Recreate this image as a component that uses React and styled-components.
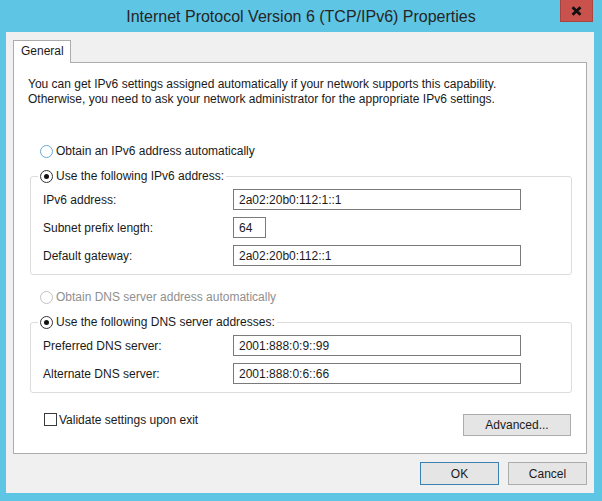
import React from 'react';
import styled, { createGlobalStyle } from 'styled-components';

const GlobalStyle = createGlobalStyle`
  html, body {
    margin: 0;
    padding: 0;
  }
  body {
    background: #5ec5e5;
    font-family: "Liberation Sans", Arial, sans-serif;
    font-size: 12px;
    color: #1a1a1a;
  }
`;

const Window = styled.div`
  width: 602px;
  height: 501px;
  background: #5ec5e5;
  display: flex;
  flex-direction: column;
`;

const TitleBar = styled.div`
  height: 32px;
  display: grid;
  grid-template-columns: 1fr auto 1fr;
  align-items: start;
`;

const Title = styled.div`
  grid-column: 2;
  line-height: 33px;
  font-size: 16px;
  color: #262626;
  white-space: nowrap;
`;

const CloseButton = styled.button`
  grid-column: 3;
  justify-self: end;
  margin-right: 9px;
  width: 33px;
  height: 22px;
  padding: 0;
  border: 1px solid #a8433f;
  border-top: none;
  background: #c9524d;
  display: flex;
  align-items: center;
  justify-content: center;
`;

const Client = styled.div`
  flex: 1;
  margin: 0 8px 8px 6px;
  background: #f0f0f0;
  padding: 8px 7px 0 7px;
  display: flex;
  flex-direction: column;
`;

const TabStrip = styled.div`
  display: flex;
`;

const Tab = styled.div`
  position: relative;
  z-index: 1;
  box-sizing: border-box;
  width: 58px;
  height: 23px;
  margin-bottom: -1px;
  padding-left: 7px;
  border: 1px solid #acacac;
  border-bottom: none;
  background: #fff;
  line-height: 21px;
`;

const Panel = styled.div`
  box-sizing: border-box;
  height: 392px;
  border: 1px solid #acacac;
  background: #fff;
  padding: 14px 14px 0 14px;
  display: flex;
  flex-direction: column;
`;

const Intro = styled.p`
  margin: 0;
  line-height: 15px;
  white-space: nowrap;
`;

const Choice = styled.label`
  display: flex;
  align-items: center;
  gap: 3px;
  height: 16px;
  margin: ${(p) => p.$top || 0}px 0 0 12px;
  color: ${(p) => (p.$disabled ? '#8f8f8f' : '#1a1a1a')};
  white-space: nowrap;
`;

const LegendChoice = styled(Choice)`
  margin: 0;
`;

const RadioDot = styled.span`
  box-sizing: border-box;
  width: 13px;
  height: 13px;
  border-radius: 50%;
  background: #fff;
  border: 1px solid
    ${(p) => (p.$tone === 'focus' ? '#6aaad8' : p.$tone === 'disabled' ? '#c2c2c2' : '#333')};
  display: flex;
  align-items: center;
  justify-content: center;

  &::after {
    content: '';
    display: ${(p) => (p.$checked ? 'block' : 'none')};
    width: 5px;
    height: 5px;
    border-radius: 50%;
    background: #111;
  }
`;

const Group = styled.fieldset`
  margin: 9px 0 0 2px;
  padding: 5px 0 8px 7px;
  min-width: 0;
  border: 1px solid #dcdcdc;
  border-radius: 3px;
`;

const Legend = styled.legend`
  padding: 0 2px;
`;

const Fields = styled.div`
  display: grid;
  grid-template-columns: 190px auto;
  row-gap: 7px;
  align-items: center;
  padding-left: 5px;
`;

const FieldLabel = styled.span`
  white-space: nowrap;
`;

const Field = styled.input`
  box-sizing: border-box;
  width: ${(p) => p.$w}px;
  height: 21px;
  padding: 0 5px;
  border: 1px solid #7a7a7a;
  background: #fff;
  font: inherit;
  color: #1a1a1a;
  outline: none;
`;

const BottomRow = styled.div`
  display: flex;
  justify-content: space-between;
  align-items: flex-start;
  margin-top: 20px;
  padding-left: 16px;
  padding-right: 1px;
`;

const CheckRow = styled.label`
  display: flex;
  align-items: center;
  gap: 2px;
  height: 13px;
`;

const CheckBox = styled.span`
  box-sizing: border-box;
  width: 13px;
  height: 13px;
  border: 1px solid #3a3a3a;
  background: #fff;
`;

const Button = styled.button`
  box-sizing: border-box;
  width: ${(p) => p.$w}px;
  height: ${(p) => p.$h || 23}px;
  margin-top: ${(p) => p.$top || 0}px;
  padding: 0;
  border: 1px solid ${(p) => (p.$primary ? '#3c7fb1' : '#acacac')};
  background: #e5e5e5;
  font: inherit;
  color: #1a1a1a;
`;

const ButtonRow = styled.div`
  display: flex;
  justify-content: flex-end;
  gap: 9px;
  margin-top: 8px;
`;

function Radio({ checked, tone, disabled, children, top }) {
  const Row = top === undefined ? LegendChoice : Choice;
  return (
    <Row $top={top} $disabled={disabled}>
      <RadioDot $checked={checked} $tone={tone} />
      {children}
    </Row>
  );
}

export default function App() {
  return (
    <Window>
      <GlobalStyle />
      <TitleBar>
        <Title>Internet Protocol Version 6 (TCP/IPv6) Properties</Title>
        <CloseButton aria-label="Close">
          <svg width="11" height="10" viewBox="0 0 11 10">
            <path d="M1.5 1.2 L9.5 8.8 M9.5 1.2 L1.5 8.8" stroke="#111" strokeWidth="2.8" />
          </svg>
        </CloseButton>
      </TitleBar>

      <Client>
        <TabStrip>
          <Tab>General</Tab>
        </TabStrip>
        <Panel>
          <Intro>
            You can get IPv6 settings assigned automatically if your network supports this capability.
            <br />
            Otherwise, you need to ask your network administrator for the appropriate IPv6 settings.
          </Intro>

          <Radio top={36} tone="focus">Obtain an IPv6 address automatically</Radio>
          <Group>
            <Legend>
              <Radio checked>Use the following IPv6 address:</Radio>
            </Legend>
            <Fields>
              <FieldLabel>IPv6 address:</FieldLabel>
              <Field $w={288} readOnly defaultValue="2a02:20b0:112:1::1" />
              <FieldLabel>Subnet prefix length:</FieldLabel>
              <Field $w={33} readOnly defaultValue="64" />
              <FieldLabel>Default gateway:</FieldLabel>
              <Field $w={288} readOnly defaultValue="2a02:20b0:112::1" />
            </Fields>
          </Group>

          <Radio top={14} tone="disabled" disabled>Obtain DNS server address automatically</Radio>
          <Group>
            <Legend>
              <Radio checked>Use the following DNS server addresses:</Radio>
            </Legend>
            <Fields>
              <FieldLabel>Preferred DNS server:</FieldLabel>
              <Field $w={288} readOnly defaultValue="2001:888:0:9::99" />
              <FieldLabel>Alternate DNS server:</FieldLabel>
              <Field $w={288} readOnly defaultValue="2001:888:0:6::66" />
            </Fields>
          </Group>

          <BottomRow>
            <CheckRow>
              <CheckBox />
              Validate settings upon exit
            </CheckRow>
            <Button $w={108} $h={22} $top={1}>Advanced...</Button>
          </BottomRow>
        </Panel>

        <ButtonRow>
          <Button $w={79} $primary>OK</Button>
          <Button $w={79}>Cancel</Button>
        </ButtonRow>
      </Client>
    </Window>
  );
}
